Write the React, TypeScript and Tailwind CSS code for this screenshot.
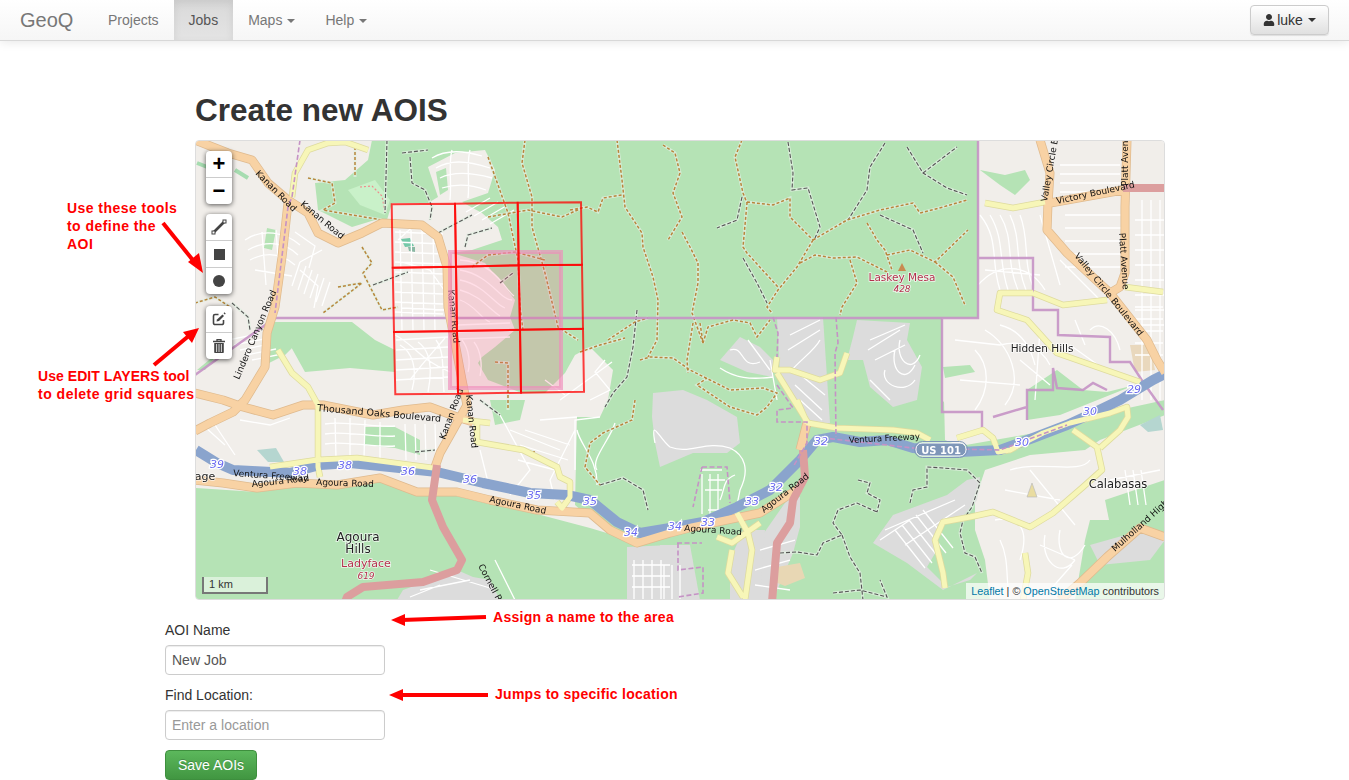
import { FaUser } from "react-icons/fa";

const font = "font-['Liberation_Sans',Arial,sans-serif]";

const pts = (a: number[][]) => a.map((p) => p.join(",")).join(" ");
const comb = (x: number, y: number, dx: number, dy: number, lx: number, ly: number, n: number) => {
  let d = "";
  for (let i = 0; i < n; i++) d += `M${x + dx * i} ${y + dy * i}l${lx} ${ly}`;
  return d;
};

const land: number[][][] = [
  [[978, 140], [1165, 140], [1165, 400], [1120, 402], [1040, 432], [960, 446], [945, 440], [942, 318], [978, 318]],
  [[985, 470], [1030, 455], [1085, 450], [1100, 440], [1165, 415], [1165, 510], [1125, 520], [1090, 520], [1085, 540], [1075, 600], [990, 600], [985, 560], [975, 530], [975, 500]],
];

const greens: number[][][] = [
  // main body, all the way round the residential blobs
  [[372, 140], [978, 140], [978, 318], [942, 318], [942, 400], [980, 440], [1165, 400], [1165, 600], [195, 600], [195, 488], [257, 492], [297, 487], [337, 489], [380, 482], [417, 496], [457, 496], [490, 504], [537, 514], [590, 528], [610, 534], [632, 538], [598, 525], [575, 505], [577, 417], [600, 417], [608, 400], [613, 370], [590, 347], [575, 355], [565, 373], [545, 393], [522, 393], [488, 380], [478, 363], [482, 357], [495, 347], [515, 330], [510, 317], [515, 300], [502, 283], [485, 263], [452, 253], [472, 250], [502, 240], [498, 227], [482, 213], [462, 202], [488, 193], [495, 170], [485, 150], [455, 153], [428, 167], [438, 197], [428, 203], [392, 203], [387, 220], [375, 220], [352, 227], [338, 220], [318, 210], [315, 183], [345, 180], [368, 160]],
  [[272, 322], [352, 322], [375, 340], [395, 350], [395, 372], [350, 368], [305, 372], [290, 345], [300, 340], [285, 355], [265, 365]],
  [[365, 427], [395, 427], [420, 440], [420, 455], [395, 448], [365, 445]],
  [[490, 400], [525, 400], [520, 420], [495, 425]],
  [[197, 370], [215, 355], [225, 345], [205, 370]],
  [[980, 170], [1000, 185], [1015, 195], [1030, 180], [1025, 170], [1005, 175]],
  [[1027, 390], [1057, 370], [1083, 390], [1107, 392], [1135, 385], [1060, 415], [1027, 420]],
  [[943, 367], [970, 365], [975, 372], [945, 378]],
  [[1105, 500], [1165, 480], [1165, 520], [1110, 525]],
  [[267, 228], [276, 230], [272, 250], [264, 248]],
  [[436, 172], [446, 168], [448, 190], [440, 195]],
];

const greys: number[][][] = [
  [[653, 393], [683, 390], [707, 400], [737, 417], [740, 443], [727, 453], [693, 453], [660, 467], [655, 443], [652, 417]],
  [[720, 360], [740, 337], [760, 347], [773, 360], [773, 377], [747, 372]],
  [[777, 317], [823, 317], [830, 423], [810, 423], [793, 397], [780, 377]],
  [[857, 320], [910, 323], [907, 340], [922, 367], [917, 400], [893, 407], [870, 387], [863, 360], [847, 360], [853, 337]],
  [[873, 543], [893, 515], [947, 495], [967, 480], [980, 477], [977, 500], [960, 520], [940, 523], [937, 550], [927, 567], [947, 587], [970, 580], [977, 573], [943, 590], [907, 563]],
  [[800, 497], [787, 500], [757, 543], [743, 600], [773, 600], [793, 553], [800, 527]],
  [[743, 530], [765, 530], [760, 600], [730, 600], [730, 560]],
  [[457, 570], [473, 577], [490, 580], [500, 600], [397, 600], [403, 590]],
  [[627, 547], [670, 545], [672, 600], [627, 600]],
  [[660, 545], [690, 545], [700, 600], [660, 600]],
  [[1090, 545], [1150, 528], [1165, 540], [1150, 560], [1100, 565]],
];

const orange = [
  "M195 140L228 153L252 160L268 183L288 200L308 213L318 233L338 243L362 233L382 223L422 225L438 237L447 267L448 307L455 343L462 380L467 405L453 430L440 453L435 467",
  "M288 203L282 257L275 307L267 333L265 367L245 400L233 412L210 423L195 431",
  "M195 393L223 400L243 407L273 415L303 405L323 405L373 415L403 410L430 407L457 417L473 422",
  "M195 480L223 483L257 488L297 483L337 485L380 478L417 492L457 492L490 500L537 510L590 513L610 530L637 543L670 533L693 527L760 513L800 488",
  "M807 423L800 450",
  "M1040 140L1050 173L1048 203L1047 230L1067 253L1110 293L1147 340L1157 360L1165 373",
  "M1127 140L1125 207L1125 273L1120 287L1110 293",
  "M1050 203L1123 190",
  "M1060 600L1080 583L1107 557L1140 528L1165 537",
];

const yellow = [
  "M368 150L345 142L328 143L308 150L295 173L292 197",
  "M278 350L292 373L308 387L318 405L318 467L320 477",
  "M270 467L317 460L357 458L433 468",
  "M463 420L490 423M477 423L477 442L523 450L557 467L560 477L570 482L570 497L562 508L557 502",
  "M777 357L775 370L790 370L820 380L840 373L847 353",
  "M777 373L808 423L837 428L893 430L917 433L930 440",
  "M797 400L807 423",
  "M957 438L983 430L993 438L998 452L1010 450L1043 433L1070 423L1110 413L1127 407L1128 417L1120 430L1100 448",
  "M1073 430L1097 447L1102 470L1083 487L1053 513L1030 527L993 512L970 517L943 522L935 540L943 573L945 588",
  "M1025 553L1028 573L1023 600",
  "M717 537L732 543L760 523M737 513L748 533L752 550L745 600M732 550L728 573L743 597",
  "M985 203L1013 208L1045 202",
  "M1125 287L1163 292",
  "M1033 293L1000 293L997 310L1027 320L1057 353L1140 382",
  "M1033 293L1063 305L1107 300",
];

const streets = [
  "M245 240C262 228 285 232 300 245M248 250C265 240 285 242 298 255M250 260C265 252 280 252 295 265M255 270L292 276M262 232L266 285M276 230L280 285",
  "M295 232l20 14l-6 22M300 262l22 -12M300 270l18 16l-4 22",
  comb(300, 262, 6, 4, -8, 24, 6),
  comb(395, 232, 0, 10, 48, 2, 9),
  comb(400, 230, 11, 0, 2, 100, 4),
  "M398 240L418 222M402 262L430 270L444 290M402 308L446 310",
  comb(396, 340, 0, 10, 52, -3, 5),
  "M400 345C412 352 418 368 412 390M418 342C432 352 432 372 428 392M436 340C445 352 442 372 444 392",
  "M395 335C415 345 420 360 450 372M410 380C425 360 435 350 445 338",
  "M432 158C445 150 462 150 482 156M436 168C450 160 465 160 490 168M440 178C452 172 470 172 492 178M442 188C455 184 470 184 486 190M452 150C448 165 452 180 450 200M470 150C466 165 470 180 468 198",
  comb(466, 212, 8, 4, 24, -14, 4),
  "M205 427L225 445M215 425L235 455M240 420L270 425L290 418",
  "M325 424C345 420 375 428 395 426M325 434C345 430 375 438 395 436M325 444C345 440 375 448 395 446M335 418L336 458M350 418L350 458M365 420L364 458M380 422L380 458",
  comb(228, 340, 6, 5, 30, -6, 5),
  comb(405, 424, 10, 0, 1, 36, 4),
  "M525 430L570 445M520 445L568 460M518 460L555 470",
  "M500 415L530 470L510 495M575 430L550 480L555 500M480 450L490 490M510 430L560 450",
  // pink-covered suburb
  "M460 270C490 275 500 300 512 300M460 280C485 285 495 305 505 308M460 290C480 295 490 310 500 316M460 300C475 305 480 318 490 322M460 260C495 262 505 290 514 296",
  comb(458, 325, 0, 7, 52, -2, 3),
  "M462 340C470 350 470 365 468 372M474 342C482 352 482 368 480 376",
  // Hidden Hills side
  "M980 215C1000 240 990 260 1000 290M1000 215C1015 240 1005 260 1018 290M1020 215C1030 240 1022 260 1034 290M990 215C1005 240 998 260 1008 290M1010 215C1022 240 1014 260 1026 290",
  "M978 285C1000 260 1030 265 1045 290",
  "M985 270L1040 275M1040 215L1060 285M1060 260L1100 300",
  comb(1060, 165, 0, 9, 60, 0, 4),
  comb(1135, 220, 0, 15, 30, 0, 8),
  comb(1065, 215, 0, 13, 56, 0, 5),
  comb(1142, 200, 9, 0, 0, 200, 3),
  "M985 330C1010 345 1025 380 1005 405M955 340L1000 345M1000 345C1020 340 1040 345 1050 365M960 380L1020 385M1040 330L1035 400M1070 345L1105 370M1090 330C1100 320 1115 330 1120 350",
  "M975 350C990 365 990 390 975 410M1000 325C1020 330 1030 345 1035 365M1075 320L1085 345M1020 360L1050 385",
  comb(1135, 295, 0, 12, 28, 0, 6),
  // grey blobs
  "M720 368C735 378 750 380 773 377M730 350C745 345 740 370 760 362M748 340L770 370",
  "M790 335L820 320M788 350L820 330M790 372C800 360 815 350 820 340M797 372L825 395M795 385L822 410M800 400L822 420",
  "M655 443C650 415 660 440 670 447C690 455 705 440 730 448C745 455 750 470 740 490L735 515",
  "M870 340L905 325M868 350L900 330M875 360L905 345M885 370C880 385 905 395 915 380M895 350C890 370 905 385 915 365M900 340C895 360 912 375 920 355M870 380L890 400",
  comb(895, 530, 7, -5, 30, 38, 5),
  "M905 545L965 505M885 530L955 500M880 540L910 520",
  "M430 570L490 588M420 590L470 580M410 597L440 585",
  comb(634, 560, 9, 0, 0, 40, 4),
  comb(632, 565, 0, 11, 38, 0, 3),
  comb(664, 565, 8, 0, 0, 35, 3),
  "M720 500C725 490 722 480 735 475M700 470L722 470M705 490L722 490M708 480L725 480M708 510L725 510",
  comb(702, 474, 8, 0, 0, 40, 3),
  "M760 550L795 540M755 570L790 560M755 585L790 590",
  "M1010 470C1040 460 1080 475 1090 460M1005 490L1060 500M1030 470L1075 525M995 520C1020 515 1030 530 1020 560M1045 535C1040 560 1060 580 1075 560M1060 530C1055 555 1070 570 1085 545",
  "M1000 540C1010 560 1005 580 1010 600M1040 545L1075 560M1050 590L1072 565",
  comb(1125, 470, 8, 0, 5, 35, 3),
  "M1110 480L1160 470",
  "M577 430C580 445 598 460 597 485M600 417L575 420L575 470M605 360L595 372L610 390L590 400",
  "M540 420L577 417M545 380L565 395M560 400L612 362",
  "M770 360L777 400M495 560L515 600M615 423C610 440 590 460 597 470",
];

const darkTrails = [
  "M788 142L793 173L792 190L808 188L820 227L815 238",
  "M885 143L870 167L867 190L848 220",
  "M907 147L923 173L947 188L967 195M923 173L957 147",
  "M880 215L913 230L923 253",
  "M742 197L737 220L717 228M743 258L757 283L767 303",
  "M637 310L633 347L627 377L613 393L605 407",
  "M600 485L623 478L643 490L648 510",
  "M373 285L408 272",
  "M438 233L472 215M465 247L468 235L492 228M500 283L513 273",
  "M387 140L385 213M402 153L428 150M410 157L412 183L425 190L432 207L430 220",
  "M232 303L248 317L250 330",
  "M780 553L797 552L817 555L823 543L842 535L833 523L838 510L857 503L877 512",
  "M858 480L870 483L867 493L880 500L877 512",
  "M910 503L913 490L927 487L927 467L943 468L967 470L980 483L972 507L963 520L960 533L965 553L975 557L982 573",
  "M842 535L850 557L860 573L863 600M833 593L860 590L887 597L880 580",
  "M415 452L435 450M480 400L500 415",
];

const brownTrails = [
  "M617 140L622 180L625 207L642 233L643 247L653 277L658 300L657 340L648 357",
  "M663 145L675 153L680 173L673 193L682 217L668 240M682 232L690 247L698 263L698 283L692 313L703 343",
  "M742 140L735 157L743 193L747 203L743 247L747 253L778 287",
  "M570 210L587 207L598 212L603 198L622 195",
  "M747 202L773 205L790 198L790 217L813 240",
  "M813 240L797 267L778 290L767 307L772 313",
  "M813 240L847 220L880 210L913 203L920 213L943 207L967 200",
  "M800 263L815 255L833 258L857 257L887 272M850 260L857 283L842 307L840 315",
  "M887 255L910 250L935 262L968 230M935 262L953 277L965 305",
  "M867 223L877 240L885 250L892 270",
  "M640 360L650 357L673 358L690 370L730 390L763 388L777 393L767 407L757 415L730 407L697 385L707 378",
  "M635 400L632 420L603 433L590 443L585 467L600 485",
  "M693 323L687 360L688 373M700 323L703 343L708 327L733 320L750 323L757 337L770 320",
  "M362 247L372 263L363 273L382 310L398 307M338 287L362 283L323 313",
  "M355 147L355 177M308 178L332 183L335 203L323 210L382 220",
  "M488 157L508 213L518 260L520 307L523 330",
  "M525 140L522 163L532 197L532 227L545 273L558 327L578 340",
  "M488 217L528 210L562 217L582 208",
  "M472 267L488 255L515 252L545 260",
  "M495 362L508 363L508 410",
  "M195 303L215 297L230 307",
  "M608 340L635 322L648 318M580 352L600 345L625 338",
  "M518 450L535 452",
];

const purpleSolid = [
  "M195 375L275 318L978 318L978 140",
  "M942 318L942 412L982 412L982 427M993 417L1027 407L1027 400",
  "M978 258L1033 258L1033 310L1058 310L1058 335L1110 337L1110 362L1130 362L1143 382L1163 410",
  "M1027 420L1027 390L1053 390L1053 368L1057 388L1083 390L1093 383L1107 390",
];

const purpleDashed = [
  "M300 140L292 197L288 207L275 313",
  "M773 317L778 333L777 357",
  "M836 317L838 343L835 353L836 437",
  "M777 385L793 408L777 410L777 422L807 422L807 443L793 467",
  "M702 467L727 467L730 503M702 467L693 507M677 543L702 543M678 543L678 570L703 567L703 593L678 597",
  "M815 437L860 442L913 448L1000 450L1067 425",
];

const grid = [
  [[391.7, 204.3], [455, 203.7], [517.7, 202.7], [581, 202.3]],
  [[392.7, 267.7], [456, 266.7], [518.7, 265.3], [582, 264.7]],
  [[394, 332], [457, 331], [520, 329.7], [583, 328.7]],
  [[395.3, 394.3], [458, 393.7], [521, 392.7], [584, 391.7]],
];
const cells = [0, 1, 2].flatMap((r) => [0, 1, 2].map((c) => [grid[r][c], grid[r][c + 1], grid[r + 1][c + 1], grid[r + 1][c]]));

const places = [
  { t: "Agoura", x: 358, y: 541, s: 12, c: "#222" },
  { t: "Hills", x: 358, y: 553, s: 12, c: "#222" },
  { t: "Ladyface", x: 366, y: 567, s: 11, c: "#b3304c" },
  { t: "Hidden Hills", x: 1042, y: 352, s: 10.5, c: "#222" },
  { t: "Calabasas", x: 1118, y: 488, s: 11.5, c: "#222" },
  { t: "Laskey Mesa", x: 902, y: 281, s: 10.5, c: "#b3304c" },
  { t: "age", x: 205, y: 480, s: 11, c: "#222" },
];

const heights = [
  { t: "619", x: 366, y: 579 },
  { t: "428", x: 902, y: 292 },
];

const shields = [
  ["39", 217, 468], ["38", 300, 475], ["38", 345, 469], ["36", 408, 475], ["36", 470, 483], ["35", 534, 499], ["35", 590, 505],
  ["34", 631, 536], ["34", 675, 530], ["33", 708, 526], ["33", 752, 505], ["32", 776, 491], ["32", 821, 445], ["30", 1022, 446], ["30", 1090, 415], ["29", 1134, 393],
] as [string, number, number][];

const roadNames = [
  { t: "Kanan Road", x: 255, y: 174, r: 45, s: 9 },
  { t: "Kanan Road", x: 300, y: 205, r: 40, s: 9 },
  { t: "Kanan Road", x: 448, y: 290, r: 84, s: 9 },
  { t: "Kanan Road", x: 466, y: 395, r: 84, s: 9 },
  { t: "Kanan Road", x: 445, y: 440, r: -70, s: 9 },
  { t: "Lindero Canyon Road", x: 239, y: 380, r: -67, s: 9 },
  { t: "Thousand Oaks Boulevard", x: 317, y: 411, r: 5, s: 9.5 },
  { t: "Ventura Freeway", x: 233, y: 476, r: 4, s: 9 },
  { t: "Agoura Road", x: 252, y: 487, r: -6, s: 9 },
  { t: "Agoura Road", x: 316, y: 485, r: 2, s: 9 },
  { t: "Agoura Road", x: 489, y: 502, r: 12, s: 9 },
  { t: "Agoura Road", x: 684, y: 531, r: 4, s: 9 },
  { t: "Agoura Road", x: 764, y: 513, r: -38, s: 9 },
  { t: "Cornell Road", x: 478, y: 566, r: 62, s: 9 },
  { t: "Ventura Freeway", x: 849, y: 443, r: -3, s: 8.5 },
  { t: "Valley Circle Boulevard", x: 1047, y: 202, r: -80, s: 9 },
  { t: "Valley Circle Boulevard", x: 1074, y: 256, r: 51, s: 9 },
  { t: "Victory Boulevard", x: 1057, y: 204, r: -12, s: 9 },
  { t: "Platt Avenue", x: 1128, y: 186, r: -90, s: 9 },
  { t: "Platt Avenue", x: 1119, y: 233, r: 86, s: 9 },
  { t: "Mulholland Highway", x: 1115, y: 552, r: -42, s: 9 },
];

function MapDrawing() {
  return (
    <svg viewBox="196 141 968 458" className="block h-full w-full blur-[0.3px]">
      <rect x="196" y="141" width="968" height="458" fill="#f1eeea" />
      {greens.slice(0, 1).map((p, i) => <polygon key={i} points={pts(p)} fill="#b5e3b5" />)}
      {land.map((p, i) => <polygon key={i} points={pts(p)} fill="#f1eeea" />)}
      {greens.slice(1).map((p, i) => <polygon key={i} points={pts(p)} fill="#b5e3b5" />)}
      {greys.map((p, i) => <polygon key={i} points={pts(p)} fill="#dcdcdc" />)}
      <path d="M348 190L375 180L390 200L385 215L360 205Z" fill="#c9f1c9" />
      <path d="M197 163L220 172M235 170L248 178" stroke="#a6dcb0" strokeWidth="4" fill="none" />
      <path d="M257 450L268 462L284 462L276 448Z" fill="#b5d6d0" />
      <path d="M1140 425L1160 415L1163 430L1148 432Z" fill="#b5d6d0" />
      <path d="M401 239L410 238L414 246L405 247Z" fill="#74c8a8" />
      <path d="M408 247L415 247L415 252L409 251Z" fill="#8ab8a4" />
      <path d="M777 567L800 563L805 578L785 586L775 582Z" fill="#e8d7b4" />
      <path d="M1130 345L1150 345L1155 370L1135 372Z" fill="#e9d8bd" />

      <path d={streets.join("")} stroke="#fff" strokeWidth="1.3" fill="none" />
      <path d="M360 187L372 186L382 196L385 212" stroke="#ef8d8d" strokeWidth="1.2" strokeDasharray="2 2" fill="none" />
      <path d={darkTrails.join("")} stroke="#e2efe2" strokeWidth="3" fill="none" opacity="0.75" />
      <path d={brownTrails.join("")} stroke="#e2efe2" strokeWidth="3" fill="none" opacity="0.75" />
      <path d={darkTrails.join("")} stroke="#555" strokeWidth="1.1" strokeDasharray="4 2" fill="none" />
      <path d={brownTrails.join("")} stroke="#b8863c" strokeWidth="1.5" strokeDasharray="3 2" fill="none" />

      <path d={purpleSolid.join("")} stroke="#c592c5" strokeWidth="2.4" fill="none" opacity="0.9" />

      <path d={yellow.join("")} stroke="#dedb9e" strokeWidth="6.5" fill="none" strokeLinejoin="round" />
      <path d={orange.join("")} stroke="#dfba8e" strokeWidth="9" fill="none" strokeLinejoin="round" />
      <path d="M196 450L217 463L233 470L290 473L320 465L350 463L390 467L437 472L483 483L530 493L567 495L590 500L617 522L640 533L670 528L703 522L737 507L770 490L800 460L817 440L833 437L860 442L887 440L913 448L960 452L1000 450L1033 438L1067 425L1093 413L1120 400L1153 380L1165 374" stroke="#8aa4cd" strokeWidth="10" fill="none" strokeLinejoin="round" />
      <path d={orange.join("")} stroke="#f8d2a4" strokeWidth="7.5" fill="none" strokeLinejoin="round" />
      <path d={yellow.join("")} stroke="#f7f6b8" strokeWidth="5" fill="none" strokeLinejoin="round" />
      <path d="M1050 203L1123 190" stroke="#f8d2a4" strokeWidth="7" fill="none" />
      <path d="M1123 188L1165 188" stroke="#dc9e9e" strokeWidth="8" fill="none" />
      <path d="M437 465L432 500L443 527L462 560L457 570L423 582L363 587L347 597L345 602" stroke="#dc9e9e" strokeWidth="8" fill="none" strokeLinejoin="round" />
      <path d="M803 450L805 477L793 500L790 523L777 543L772 602" stroke="#dc9e9e" strokeWidth="8" fill="none" strokeLinejoin="round" />
      <path d={purpleDashed.join("")} stroke="#c592c5" strokeWidth="1.6" strokeDasharray="5 2.5" fill="none" />

      {roadNames.map((n, i) => (
        <text key={i} transform={`translate(${n.x} ${n.y}) rotate(${n.r})`} fontFamily="DejaVu Sans" fontSize={n.s} fill="#111">{n.t}</text>
      ))}
      {shields.map(([t, x, y], i) => (
        <text key={i} x={x} y={y} textAnchor="middle" fontFamily="DejaVu Sans" fontStyle="italic" fontSize="11" fill="#6a6af0" stroke="#fff" strokeWidth="2.5" paintOrder="stroke">{t}</text>
      ))}
      {places.map((p, i) => (
        <text key={i} x={p.x} y={p.y} textAnchor="middle" fontFamily="DejaVu Sans" fontSize={p.s} fill={p.c} stroke="#fff" strokeWidth="1.6" paintOrder="stroke" strokeOpacity="0.75">{p.t}</text>
      ))}
      {heights.map((h, i) => (
        <text key={i} x={h.x} y={h.y} textAnchor="middle" fontFamily="DejaVu Sans" fontStyle="italic" fontSize="9" fill="#b3304c" stroke="#fff" strokeWidth="1.6" paintOrder="stroke" strokeOpacity="0.75">{h.t}</text>
      ))}
      <path d="M902 263L906 271L898 271Z" fill="#c98a50" />
      <path d="M1032 483L1037 497L1027 497Z" fill="#e9dca0" stroke="#bbb" strokeWidth="0.7" />

      <g transform="translate(916 443)">
        <rect width="50" height="13" rx="6" fill="#7e96b8" stroke="#fff" strokeWidth="1" />
        <rect x="-1.5" y="-1.5" width="53" height="16" rx="8" fill="none" stroke="#7e96b8" strokeWidth="1" />
        <text x="25" y="10.5" textAnchor="middle" fontFamily="DejaVu Sans" fontWeight="bold" fontSize="10" fill="#fff">US 101</text>
      </g>

      <rect x="450" y="252" width="111" height="136" fill="#ff5c88" fillOpacity="0.2" stroke="#f08cbc" strokeOpacity="0.65" strokeWidth="4" />
      {cells.map((c, i) => <polygon key={i} points={pts(c)} fill="none" stroke="#f00" strokeOpacity="0.75" strokeWidth="2" />)}
    </svg>
  );
}

type Tool = "line" | "square" | "circle" | "edit" | "trash";

function ToolIcon({ name }: { name: Tool }) {
  if (name === "line")
    return (
      <svg width="16" height="16" viewBox="0 0 16 16" fill="none">
        <path d="M2.5 13.5L13.5 2.5" stroke="#444" strokeWidth="2.6" />
        <rect x="1" y="12" width="3" height="3" fill="#fff" stroke="#444" />
        <rect x="12" y="1" width="3" height="3" fill="#fff" stroke="#444" />
      </svg>
    );
  if (name === "square") return <div className="h-[11px] w-[11px] bg-[#444]" />;
  if (name === "circle") return <div className="h-[12px] w-[12px] rounded-full bg-[#444]" />;
  if (name === "edit")
    return (
      <svg width="14" height="14" viewBox="0 0 14 14" fill="none">
        <path d="M6.5 2.5H3A1.5 1.5 0 0 0 1.5 4v7A1.5 1.5 0 0 0 3 12.5h7A1.5 1.5 0 0 0 11.5 11V8" stroke="#444" strokeWidth="1.6" />
        <path d="M4.5 9.5L5 7.5L10.5 2.5L12 4L7 9Z" fill="#444" />
        <path d="M12 0.8L13.3 2.1" stroke="#444" strokeWidth="1.3" />
      </svg>
    );
  return (
    <svg width="12" height="14" viewBox="0 0 12 14" fill="none">
      <path d="M0 2.5H12M4 2V0.7H8V2" stroke="#444" strokeWidth="1.3" />
      <path d="M1.2 4H10.8V13.2A0.8 0.8 0 0 1 10 14H2A0.8 0.8 0 0 1 1.2 13.2Z" fill="#444" />
      <path d="M3.6 5V13M6 5V13M8.4 5V13" stroke="#fff" strokeWidth="0.8" />
    </svg>
  );
}

function ToolGroup({ names, className }: { names: Tool[]; className?: string }) {
  return (
    <div className={`w-[26px] overflow-hidden rounded-[4px] bg-white shadow-[0_1px_5px_rgba(0,0,0,0.65)] ${className ?? ""}`}>
      {names.map((n, i) => (
        <div key={n} className={`flex h-[26px] items-center justify-center ${i > 0 ? "border-t border-[#ccc] box-content" : ""}`}>
          <ToolIcon name={n} />
        </div>
      ))}
    </div>
  );
}

function Caret({ className }: { className: string }) {
  return <span className={`ml-[5px] inline-block h-0 w-0 border-x-4 border-t-4 border-x-transparent align-middle ${className}`} />;
}

function Note({ children, className }: { children: React.ReactNode; className: string }) {
  return <div className={`absolute whitespace-nowrap text-[14px] leading-[18px] font-bold text-[#f00] ${className}`}>{children}</div>;
}

export default function App() {
  return (
    <div className={`relative min-h-[780px] overflow-hidden bg-white text-[14px] text-[#333] ${font}`}>
      <nav className="flex h-[41px] items-center border-b border-[#d8d8d8] bg-gradient-to-b from-white to-[#f6f6f6] shadow-[0_1px_10px_rgba(0,0,0,0.1)]">
        <a className="ml-[20px] w-[73px] text-[20px] text-[#777]">GeoQ</a>
        <a className="px-[15px] leading-[40px] text-[#777]">Projects</a>
        <a className="h-[40px] bg-gradient-to-b from-[#d9d9d9] to-[#e4e4e4] px-[15px] leading-[40px] text-[#555] shadow-[inset_0_3px_9px_rgba(0,0,0,0.08)]">Jobs</a>
        <a className="px-[15px] leading-[40px] text-[#777]">Maps<Caret className="border-t-[#777]" /></a>
        <a className="px-[15px] leading-[40px] text-[#777]">Help<Caret className="border-t-[#777]" /></a>
        <button className="mr-[20px] ml-auto flex h-[30px] w-[79px] items-center justify-center rounded-[4px] border border-[#ccc] bg-gradient-to-b from-white to-[#e0e0e0] text-[14px] text-[#333] shadow-[0_1px_1px_rgba(0,0,0,0.1)]">
          <FaUser className="mr-[2px] text-[12px]" />
          luke
          <Caret className="border-t-[#333]" />
        </button>
      </nav>

      <main className="pl-[165px]">
        <h1 className="mt-[49px] ml-[30px] h-[40px] text-[31.5px] leading-[40px] font-bold">Create new AOIS</h1>
        <div className="relative mt-[10px] ml-[30px] h-[460px] w-[970px] overflow-hidden rounded-[4px] border border-[#ddd]">
          <MapDrawing />
          <div className="absolute top-[10px] left-[10px]">
            <div className="w-[26px] overflow-hidden rounded-[4px] bg-white text-[#000] shadow-[0_1px_5px_rgba(0,0,0,0.65)]">
              <div className="flex h-[26px] items-center justify-center text-[22px] leading-none font-bold">+</div>
              <div className="box-content flex h-[26px] items-center justify-center border-t border-[#ccc] text-[22px] leading-none font-bold">−</div>
            </div>
            <ToolGroup names={["line", "square", "circle"]} className="mt-[10px]" />
            <ToolGroup names={["edit", "trash"]} className="mt-[12px]" />
          </div>
          <div className="absolute bottom-[5px] left-[6px] h-[17px] w-[66px] border-2 border-t-0 border-[#777] bg-white/50 pl-[5px] text-[11px] leading-[15px] text-[#333]">1 km</div>
          <div className="absolute right-0 bottom-0 bg-white/70 px-[5px] text-[10.8px] leading-[16px] text-[#333]">
            <span className="text-[#0078a8]">Leaflet</span> | © <span className="text-[#0078a8]">OpenStreetMap</span> contributors
          </div>
        </div>

        <form>
          <label className="mt-[20px] mb-[5px] block h-[20px] leading-[20px]">AOI Name</label>
          <input
            readOnly
            value="New Job"
            className="block h-[30px] w-[220px] rounded-[4px] border border-[#ccc] px-[6px] text-[14px] text-[#555] shadow-[inset_0_1px_1px_rgba(0,0,0,0.075)]"
          />
          <label className="mt-[10px] mb-[5px] block h-[20px] leading-[20px]">Find Location:</label>
          <input
            readOnly
            placeholder="Enter a location"
            className="block h-[30px] w-[220px] rounded-[4px] border border-[#ccc] px-[6px] text-[14px] text-[#555] shadow-[inset_0_1px_1px_rgba(0,0,0,0.075)] placeholder:text-[#999]"
          />
          <button type="button" className="mt-[10px] block h-[30px] w-[92px] rounded-[4px] border border-[#3e8f3e] bg-gradient-to-b from-[#5cb85c] to-[#419641] text-[14px] text-white [text-shadow:0_-1px_0_rgba(0,0,0,0.2)]">
            Save AOIs
          </button>
        </form>
      </main>

      <Note className="top-[199px] left-[67px] tracking-[0.45px]">Use these tools<br />to define the<br />AOI</Note>
      <Note className="top-[367px] left-[38px]"><span className="tracking-[0.05px]">Use EDIT LAYERS tool</span><br /><span className="tracking-[0.5px]">to delete grid squares</span></Note>
      <Note className="top-[608px] left-[493px] tracking-[0.3px]">Assign a name to the area</Note>
      <Note className="top-[685px] left-[495px] tracking-[0.27px]">Jumps to specific location</Note>

      <svg className="pointer-events-none absolute top-0 left-0" width="1349" height="780">
        <path d="M163 223L196 264" stroke="#f00" strokeWidth="4" />
        <polygon points="203,273 188,262 199,253" fill="#f00" />
        <path d="M154 365L191 334" stroke="#f00" strokeWidth="4" />
        <polygon points="199,328 192,343 183,332" fill="#f00" />
        <path d="M486 617L402 620" stroke="#f00" strokeWidth="4" />
        <polygon points="391,620 405,614 405,626" fill="#f00" />
        <path d="M488 695L400 695" stroke="#f00" strokeWidth="4" />
        <polygon points="389,695 403,689 403,701" fill="#f00" />
      </svg>
    </div>
  );
}
